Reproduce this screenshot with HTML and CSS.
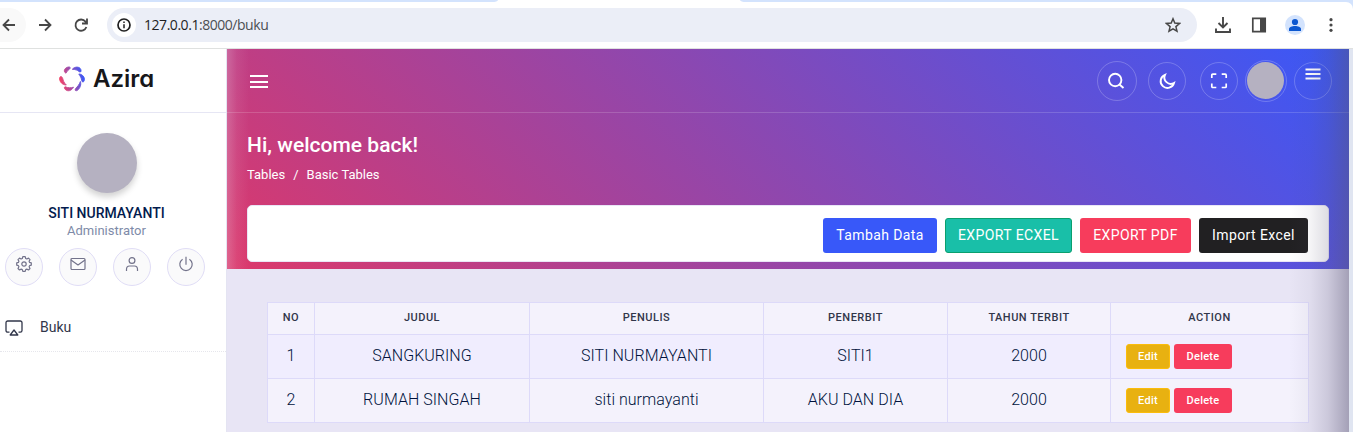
FILE: index.html
```html
<!DOCTYPE html>
<html lang="id">
<head>
<meta charset="utf-8">
<title>Azira - Buku</title>
<link rel="stylesheet" href="styles.css">
</head>
<body>
<header class="browser">
  <div class="tabs"><span class="tab-left"></span><span class="tab-right"></span></div>
  <div class="toolbar">
    <span class="back"><svg width="16" height="16" viewBox="0 0 16 16" class="nav-icon"><path d="M14 8H3M8 2.5 2.5 8 8 13.5"/></svg></span>
    <svg width="16" height="16" viewBox="0 0 16 16" class="nav-icon forward"><path d="M2 8h11M8 2.5 13.5 8 8 13.5"/></svg>
    <svg width="16" height="16" viewBox="0 0 16 16" class="nav-icon reload"><path d="M13.4 10A5.6 5.6 0 1 1 12.5 4.6L14 6.3M14 1.5v5H9"/></svg>
    <div class="address">
      <span class="info"><svg width="14" height="14" viewBox="0 0 14 14"><circle cx="7" cy="7" r="6" fill="none" stroke="#1f1f1f" stroke-width="1.7"/><path d="M7 6.3v3.9M7 3.6v1.5" stroke="#1f1f1f" stroke-width="1.5"/></svg></span>
      <span class="url"><b>127.0.0.1</b>:8000/buku</span>
      <svg class="star" width="16" height="16" viewBox="0 0 16 16"><path d="M8 1.8l1.8 4.3 4.7.4-3.6 3.1 1.1 4.6L8 11.8l-4 2.4 1.1-4.6-3.6-3.1 4.7-.4z" fill="none" stroke="#474747" stroke-width="1.5"/></svg>
    </div>
    <div class="tools">
      <svg width="16" height="16" viewBox="0 0 16 16"><path d="M8 0v10M3.5 6 8 10.500 12.500 6M1 11.500V15h14v-3.500" fill="none" stroke="#474747" stroke-width="1.9"/></svg>
      <svg width="16" height="16" viewBox="0 0 16 16"><path d="M1.800 1.300h12.400v13.400H1.800z" fill="none" stroke="#474747" stroke-width="1.700"/><path d="M9 1h5.500v14H9z" fill="#474747"/></svg>
      <svg width="20" height="20" viewBox="0 0 20 20"><circle cx="10" cy="10" r="10" fill="#d3e3fd"/><circle cx="10" cy="7" r="3.100" fill="#0b57d0"/><path d="M4 16v-2c0-2 3-3 6-3s6 1 6 3v2z" fill="#0b57d0"/></svg>
      <svg width="16" height="16" viewBox="0 0 16 16" fill="#474747"><circle cx="8" cy="2.700" r="1.600"/><circle cx="8" cy="8" r="1.600"/><circle cx="8" cy="13.300" r="1.600"/></svg>
    </div>
  </div>
</header>
<div class="app">
  <aside class="sidebar">
    <div class="brand">
      <svg width="26" height="26" viewBox="0 0 26 26">
        <defs><linearGradient id="ring" gradientUnits="userSpaceOnUse" x1="1" y1="16" x2="25" y2="10"><stop offset="0" stop-color="#f54266"/><stop offset="1" stop-color="#3858f9"/></linearGradient></defs>
        <g fill="url(#ring)" stroke="url(#ring)" stroke-width=".9" stroke-linejoin="round">
          <path d="M8.300 1.300C10.500.5 12.200 1.200 10.600 3 9 4.500 8 5 7 7.200 4.300 6 5 2.500 8.300 1.300Z"/>
          <path d="M13.300 3.300C16 .2 20.500.500 21.800 3.400 22.500 5.600 21.500 6.800 20 5.500 18.300 4 16.500 3.500 13.300 3.300Z"/>
          <path d="M19.800 8C23.500 8 26 11.500 25.300 14.200 24.800 16.500 23.200 16.600 22.700 14.500 22.300 12 21.500 10.500 19.800 8Z"/>
          <path d="M21.400 15.500C22.500 18.500 21 22.500 18.500 24.300 16.500 25.500 15.500 24.200 16.600 22.600 18.500 20.600 20.300 18.500 21.400 15.500Z"/>
          <path d="M6.300 20.800C9.300 22 11.500 22 14.500 21.200 12.300 25.200 8.700 25.500 6.500 23.700 5 22.300 5.200 20.700 6.300 20.800Z"/>
          <path d="M3.600 12.200C4.500 15 4.700 16.500 7.300 19 3.500 19 .8 16 .6 13 .5 10.200 2.500 9.500 3.600 12.200Z"/>
        </g>
      </svg>
      <span>Azira</span>
    </div>
    <div class="profile">
      <div class="portrait"></div>
      <div class="name">SITI NURMAYANTI</div>
      <div class="role">Administrator</div>
      <div class="shortcuts">
        <a><svg class="line" width="16" height="16" viewBox="0 0 16 16"><circle cx="8" cy="8" r="2.200"/><path d="M6.800.7h2.400l.5 1.800 1.100.5 1.700-.9 1.500 1.500-.9 1.700.5 1.100 1.700.5v2.300l-1.700.5-.5 1.100.9 1.700-1.500 1.500-1.700-.9-1.100.5-.5 1.700H6.800l-.5-1.700-1.100-.5-1.700.9L2 12.500l.9-1.700-.5-1.100-1.700-.5V6.900l1.700-.5.5-1.100L2 3.600l1.500-1.500 1.700.9 1.100-.5z"/></svg></a>
        <a><svg class="line" width="16" height="16" viewBox="0 0 16 16"><rect x="1" y="2.500" width="14" height="11" rx="1"/><path d="M1 4l7 5 7-5"/></svg></a>
        <a><svg class="line" width="16" height="16" viewBox="0 0 16 16"><circle cx="8" cy="4.500" r="2.900"/><path d="M2.500 15v-1.800c0-2 1.200-3.200 3-3.200h5c1.800 0 3 1.200 3 3.200V15"/></svg></a>
        <a><svg class="line" width="16" height="16" viewBox="0 0 16 16"><path d="M8 .8v8M4.600 3.200a6.200 6.200 0 1 0 6.800 0"/></svg></a>
      </div>
    </div>
    <a class="menu-item"><svg width="18" height="16" viewBox="0 0 18 16"><path d="M4.500 12.200H2.700A1.700 1.700 0 0 1 1 10.500V2.700A1.700 1.700 0 0 1 2.700 1h12.600A1.700 1.700 0 0 1 17 2.700v7.800a1.700 1.700 0 0 1-1.700 1.700H13.500M9 10l-3.800 5h7.600z" fill="none" stroke="#31364a" stroke-width="1.300" stroke-linejoin="round"/></svg><span>Buku</span></a>
  </aside>
  <main class="main">
    <section class="hero">
      <div class="topbar">
        <svg class="burger" width="18" height="13" viewBox="0 0 18 13"><path d="M0 1h18M0 7h18M0 12h18" stroke="#fff" stroke-width="2"/></svg>
        <div class="actions">
          <a class="round search"><svg width="18" height="18" viewBox="0 0 18 18"><circle cx="8.200" cy="8" r="6.200"/><path d="M12.500 12.500 16.500 16"/></svg></a>
          <a class="round moon"><svg width="18" height="18" viewBox="0 0 18 18"><path d="M7 2.800A6.800 6.800 0 1 0 16 11 6.400 6.400 0 0 1 7 2.800Z"/></svg></a>
          <a class="round full"><svg width="18" height="18" viewBox="0 0 18 18"><path d="M1.800 6V3.200q0-1 1-1h3.500M11.700 2.200h3.500q1 0 1 1V6M16.200 11.500v3q0 1-1 1h-3.500M6.300 15.500H2.800q-1 0-1-1v-3"/></svg></a>
          <a class="round me"><i></i></a>
          <a class="round more"><svg width="16" height="12" viewBox="0 0 16 12"><path d="M.5 1.500h15M.5 6h15M.5 10.500h15"/></svg></a>
        </div>
      </div>
      <div class="heading">
        <h1>Hi, welcome back!</h1>
        <div class="crumbs"><span>Tables</span><span>/</span><span>Basic Tables</span></div>
      </div>
      <div class="card">
        <a class="btn blue">Tambah Data</a><a class="btn green">EXPORT ECXEL</a><a class="btn red">EXPORT PDF</a><a class="btn dark">Import Excel</a>
      </div>
    </section>
    <table class="books">
      <colgroup><col class="c1"><col class="c2"><col class="c3"><col class="c4"><col class="c5"><col class="c6"></colgroup>
      <thead><tr><th>NO</th><th>JUDUL</th><th>PENULIS</th><th>PENERBIT</th><th>TAHUN TERBIT</th><th>ACTION</th></tr></thead>
      <tbody>
        <tr><td>1</td><td>SANGKURING</td><td>SITI NURMAYANTI</td><td>SITI1</td><td>2000</td><td><div class="ops"><a class="edit">Edit</a><a class="delete">Delete</a></div></td></tr>
        <tr><td>2</td><td>RUMAH SINGAH</td><td>siti nurmayanti</td><td>AKU DAN DIA</td><td>2000</td><td><div class="ops"><a class="edit">Edit</a><a class="delete">Delete</a></div></td></tr>
      </tbody>
    </table>
    <div class="edge-light"></div>
    <div class="edge-shade"></div>
  </main>
  <div class="gutter"></div>
</div>
</body>
</html>
```
FILE: styles.css
```css
* { box-sizing: border-box; }
body { margin: 0; width: 1353px; height: 432px; overflow: hidden; font-family: Roboto, "Liberation Sans", sans-serif; color: #031b4e; background: #fff; display: flex; flex-direction: column; }
svg { display: block; flex: none; }

/* Browser bar */
.browser { height: 49px; border-bottom: 1px solid #dfe1e0; background: #d3e3fd; flex: none; }
.tabs { height: 2px; background: #fff; display: flex; justify-content: space-between; }
.tab-left { width: 498px; background: #d3e3fd; border-bottom-right-radius: 6px 2px; }
.tab-right { width: 613px; background: #d3e3fd; border-bottom-left-radius: 6px 2px; }
.toolbar { height: 46px; background: #fff; border-top-right-radius: 7px; display: flex; align-items: center; }
.back { width: 26px; height: 34px; background: #f9f9f9; border-radius: 0 17px 17px 0; display: flex; align-items: center; padding-left: 1px; }
.nav-icon { fill: none; stroke: #474747; stroke-width: 1.8; }
.forward { margin-left: 11px; }
.reload { margin-left: 20px; }
.address { margin-left: 18px; width: 1090px; height: 34px; border-radius: 17px; background: #ebeef7; display: flex; align-items: center; padding: 0 16px 0 5px; }
.info { width: 24px; height: 24px; border-radius: 50%; background: #fff; display: flex; align-items: center; justify-content: center; }
.url { margin-left: 8px; padding-bottom: 1px; font: 14px "Open Sans", "Noto Sans", sans-serif; letter-spacing: -.46px; color: #4b4e53; }
.url b { font-weight: 400; color: #1f1f1f; }
.star { margin-left: auto; }
.tools { display: flex; align-items: center; gap: 20px; margin-left: 18px; }
.tools svg:nth-child(3) { margin-left: -2px; }
.tools svg:nth-child(4) { margin-left: -2px; }

.app { flex: 1; display: flex; min-height: 0; }

/* Sidebar */
.sidebar { width: 227px; border-right: 1px solid #e4e4f2; background: #fff; }
.brand { height: 64px; border-bottom: 1px solid #e6e6f4; display: flex; align-items: center; gap: 8px; padding: 0 0 4px 59px; font: 600 24px Inter, sans-serif; font-feature-settings: "cv11"; letter-spacing: 0; color: #17171a; }
.profile { display: flex; flex-direction: column; align-items: center; padding: 20px 13px 0 0; }
.portrait { width: 60px; height: 60px; border-radius: 50%; background: #b5b1c1; box-shadow: 0 4px 6px rgba(0,0,0,.18); }
.name { margin-top: 12px; font-weight: 500; font-size: 14px; line-height: 17px; }
.role { font-size: 13px; line-height: 17px; color: #7e8ba8; }
.shortcuts { display: flex; gap: 16px; margin-top: 9px; margin-right: 4px; }
.shortcuts a { width: 38px; height: 38px; border: 1px solid #e0ddf6; border-radius: 50%; background: #fafafb; display: flex; justify-content: center; padding-top: 7px; }
.line { fill: none; stroke: #73738b; stroke-width: 1.2; stroke-linejoin: round; }
.menu-item { display: flex; align-items: center; gap: 17px; height: 47px; margin-top: 19px; padding: 0 0 1px 5px; border-bottom: 1px dotted #e6e6ec; font-size: 14px; color: #31364a; }
.menu-item span { padding-bottom: 1px; }

/* Main area */
.main { width: 1122px; position: relative; background: #e8e5f5; }
.gutter { width: 4px; background: #e0e5f1; }
.hero { height: 220px; background: linear-gradient(45deg, #dc386b, #3858f9); }
.topbar { height: 64px; border-bottom: 1px solid rgba(255,255,255,.16); display: flex; align-items: center; justify-content: space-between; padding: 0 17px 0 23px; }
.burger { margin-top: 1px; }
.actions { display: flex; align-items: center; }
.round { width: 38px; height: 38px; border: 1px solid rgba(255,255,255,.22); border-radius: 50%; display: flex; align-items: center; justify-content: center; }
.round svg { fill: none; stroke: #fff; stroke-width: 1.9; }
.search { width: 40px; height: 40px; margin-right: 11px; padding-right: 2px; }
.moon { margin-right: 14px; padding-right: 1px; }
.full { margin-right: 7px; }
.full svg { stroke-width: 1.7; }
.me { width: 42px; height: 42px; margin-right: 7px; }
.me i { width: 37px; height: 37px; margin-right: 1px; border-radius: 50%; background: #b5b1c1; }
.more { align-items: flex-start; padding-top: 5px; }
.heading { height: 92px; padding: 19px 20px 0; color: #fff; }
h1 { margin: 0; font-size: 21px; line-height: 26px; font-weight: 500; letter-spacing: .03px; }
.crumbs { display: flex; gap: 8px; margin-top: 8px; font-size: 13px; line-height: 18px; }
.card { margin: 0 20px; height: 57px; background: #fff; border: 1px solid #e9e6f6; border-radius: 5px; display: flex; justify-content: flex-end; align-items: center; gap: 8px; padding: 3px 20px 0 0; }
.btn { height: 35px; border-radius: 3px; display: flex; align-items: center; justify-content: center; font-size: 14px; letter-spacing: .4px; color: #fff; }
.blue { width: 114px; background: #3858f9; }
.green { width: 127px; background: #19bfa8; border: 1px solid #0aa06e; }
.red { width: 111px; background: #f73c5c; }
.dark { width: 109px; background: #212022; }

/* Table */
.books { margin: 33px 0 0 40px; width: 1042px; table-layout: fixed; border-collapse: collapse; background: #f4f2fc; text-align: center; }
.c1 { width: 47px; } .c2 { width: 215px; } .c3 { width: 234px; } .c4 { width: 184px; } .c5 { width: 163px; } .c6 { width: 198px; }
th, td { border: 1px solid #dddaf9; padding: 0; }
th { height: 32px; padding-bottom: 3px; font-size: 11px; font-weight: 500; letter-spacing: .5px; color: #31364a; }
td { height: 44px; font-size: 16px; font-weight: 300; letter-spacing: .04px; padding-bottom: 2px; color: #00123c; }
tbody tr:first-child { background: #f0edfe; }
.ops { display: flex; gap: 4px; padding: 2px 0 0 15px; }
.ops a { height: 25px; border-radius: 3px; font-size: 11px; font-weight: 500; letter-spacing: .25px; color: #fff; display: flex; align-items: center; justify-content: center; }
.ops .edit { width: 44px; background: #e8b111; border: 1px solid #fbbc0b; }
.ops .delete { width: 58px; background: #f73c5c; }

/* Soft edges laid over the content */
.edge-light, .edge-shade { position: absolute; top: 0; bottom: 0; pointer-events: none; }
.edge-light { left: 0; width: 22px; background: linear-gradient(90deg, rgba(232,229,245,.25), rgba(232,229,245,.08) 45%, transparent); }
.edge-shade { right: 0; width: 60px; background: linear-gradient(90deg, transparent, rgba(90,85,115,.06) 35%, rgba(90,85,115,.2) 65%, rgba(90,85,115,.48)); }
```
